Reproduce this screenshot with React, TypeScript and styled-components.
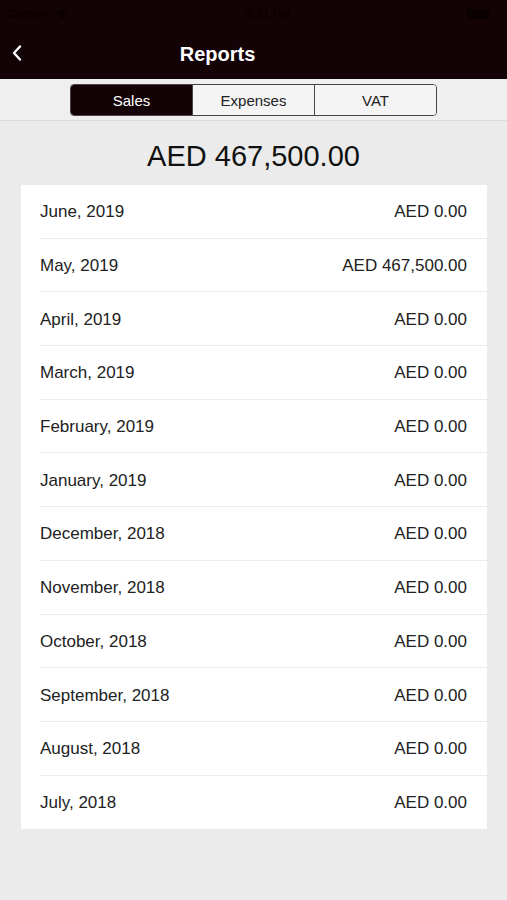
import React from "react";
import styled, { createGlobalStyle } from "styled-components";

const Global = createGlobalStyle`
  html, body { margin: 0; padding: 0; background: #ebebeb; }
  body { font-family: "Liberation Sans", Arial, Helvetica, sans-serif; }
  * { box-sizing: border-box; }
`;

const Screen = styled.div`
  width: 507px;
  height: 900px;
  background: #ebebeb;
  display: flex;
  flex-direction: column;
  overflow: hidden;
`;

const Header = styled.div`
  background: #140306;
  height: 79px;
  display: flex;
  flex-direction: column;
`;

const StatusBar = styled.div`
  height: 27px;
  display: flex;
  align-items: center;
  justify-content: space-between;
  padding: 0 18px 0 8px;
  color: #0a0002;
  font-size: 12px;
  font-weight: bold;
`;

const StatusLeft = styled.div`
  display: flex;
  align-items: center;
  gap: 8px;
`;

const Battery = styled.div`
  width: 22px;
  height: 10px;
  border-radius: 2px;
  background: #0a0002;
`;

const NavBar = styled.div`
  flex: 1;
  position: relative;
  display: flex;
  align-items: center;
  justify-content: center;
  padding: 2px 72px 0 0;
`;

const Title = styled.div`
  color: #ffffff;
  font-size: 20px;
  font-weight: bold;
`;

const BackButton = styled.div`
  position: absolute;
  left: 10px;
  top: 16px;
  width: 14px;
  height: 20px;
  display: flex;
  align-items: center;
  justify-content: center;
`;

const SegmentBar = styled.div`
  background: #efefef;
  border-bottom: 1px solid #dcdcdc;
  height: 42px;
  display: flex;
  justify-content: center;
  padding-top: 5px;
`;

const Segmented = styled.div`
  width: 367px;
  height: 32px;
  display: flex;
  border: 1.5px solid #4a4444;
  border-radius: 4px;
  overflow: hidden;
`;

const Segment = styled.div<{ $active?: boolean }>`
  flex: 1;
  display: flex;
  align-items: center;
  justify-content: center;
  font-size: 15px;
  color: ${(p) => (p.$active ? "#ffffff" : "#222")};
  background: ${(p) => (p.$active ? "#140306" : "#f4f4f4")};
  & + & {
    border-left: 1.5px solid #4a4444;
  }
`;

const Total = styled.div`
  text-align: center;
  font-size: 29px;
  color: #111;
  padding: 19px 0 13px;
  line-height: 32px;
`;

const Card = styled.div`
  margin: 0 20px 0 21px;
  background: #ffffff;
  display: flex;
  flex-direction: column;
`;

const Row = styled.div`
  height: 53.7px;
  margin-left: 19px;
  padding: 2px 20px 0 0;
  display: flex;
  align-items: center;
  justify-content: space-between;
  font-size: 17px;
  color: #222;
  border-bottom: 1px solid #ececec;
  &:last-child {
    border-bottom: none;
  }
`;

const rows: [string, string][] = [
  ["June, 2019", "AED 0.00"],
  ["May, 2019", "AED 467,500.00"],
  ["April, 2019", "AED 0.00"],
  ["March, 2019", "AED 0.00"],
  ["February, 2019", "AED 0.00"],
  ["January, 2019", "AED 0.00"],
  ["December, 2018", "AED 0.00"],
  ["November, 2018", "AED 0.00"],
  ["October, 2018", "AED 0.00"],
  ["September, 2018", "AED 0.00"],
  ["August, 2018", "AED 0.00"],
  ["July, 2018", "AED 0.00"],
];

export default function App() {
  return (
    <>
      <Global />
      <Screen>
        <Header>
          <StatusBar>
            <StatusLeft>
              <span>Carrier</span>
              <svg width="14" height="10" viewBox="0 0 14 10">
                <path d="M1 3 Q7 -2 13 3 L7 10 Z" fill="#0a0002" />
              </svg>
            </StatusLeft>
            <span>4:31 PM</span>
            <Battery />
          </StatusBar>
          <NavBar>
            <BackButton>
              <svg width="10" height="16" viewBox="0 0 10 16">
                <path d="M8 1.5 L2 8 L8 14.5" stroke="#ffffff" strokeWidth="2.4" fill="none" strokeLinecap="round" strokeLinejoin="round" />
              </svg>
            </BackButton>
            <Title>Reports</Title>
          </NavBar>
        </Header>
        <SegmentBar>
          <Segmented>
            <Segment $active>Sales</Segment>
            <Segment>Expenses</Segment>
            <Segment>VAT</Segment>
          </Segmented>
        </SegmentBar>
        <Total>AED 467,500.00</Total>
        <Card>
          {rows.map(([m, v]) => (
            <Row key={m}>
              <span>{m}</span>
              <span>{v}</span>
            </Row>
          ))}
        </Card>
      </Screen>
    </>
  );
}
